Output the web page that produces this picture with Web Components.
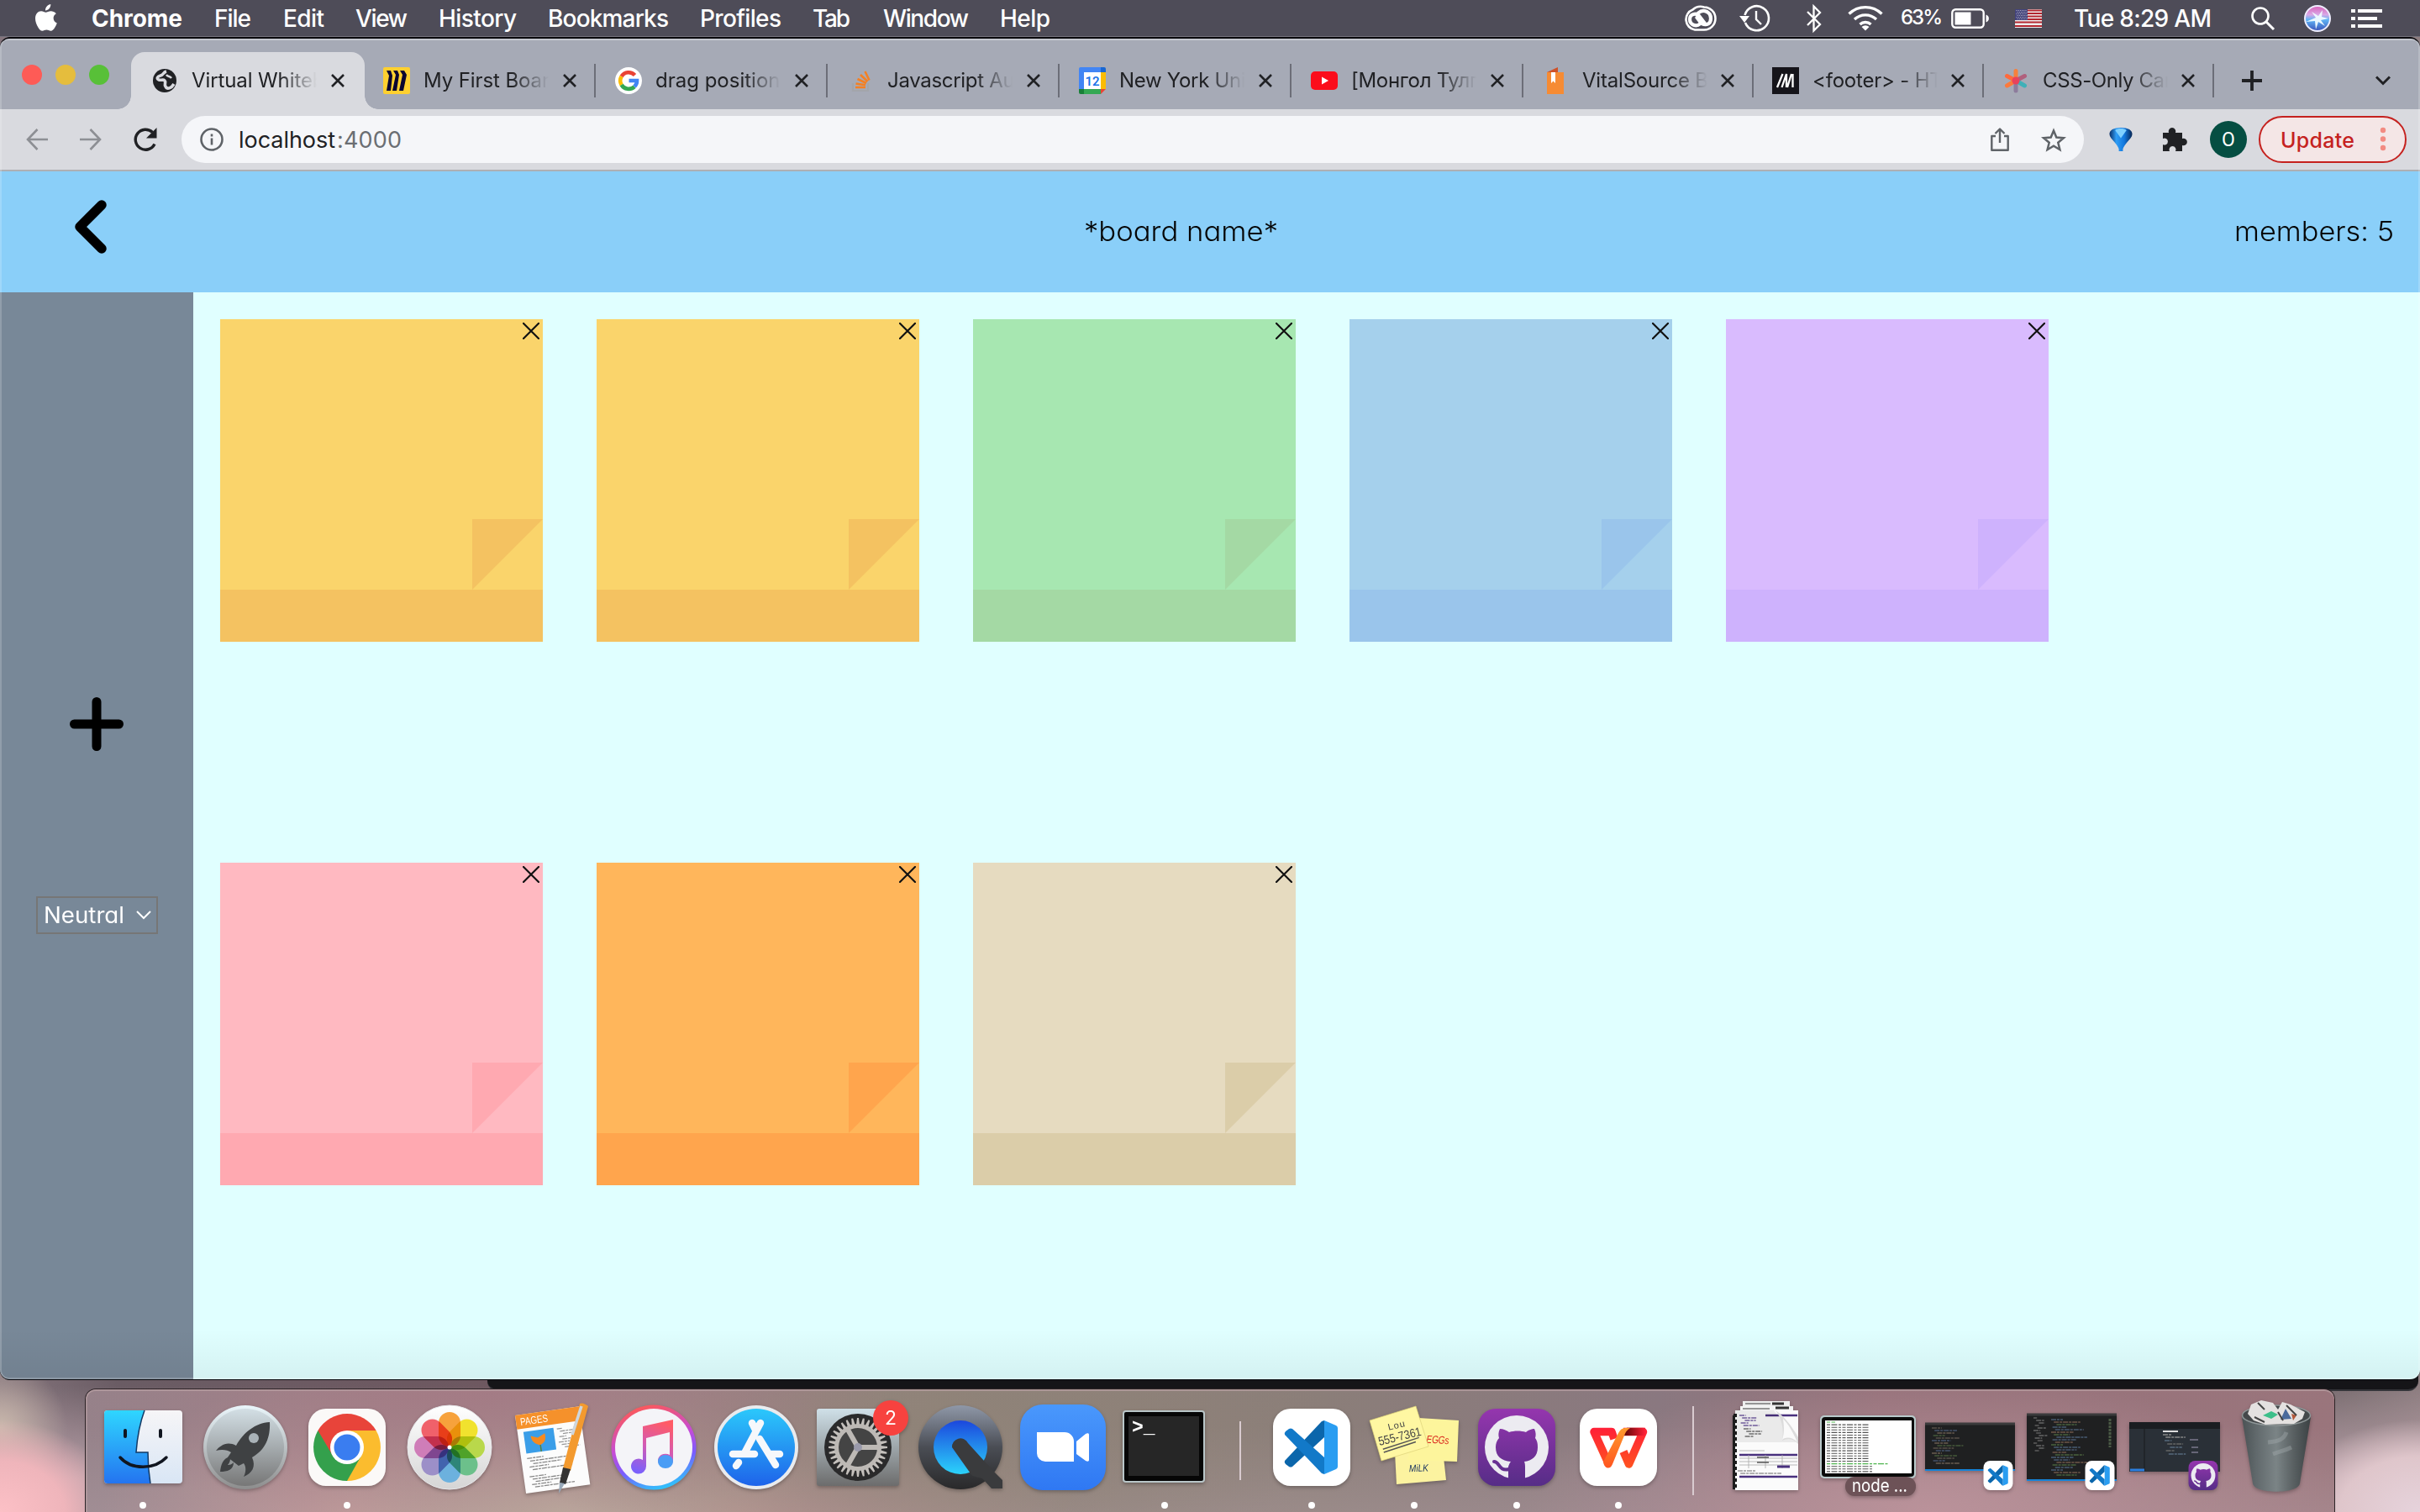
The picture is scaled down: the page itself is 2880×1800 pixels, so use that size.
<!DOCTYPE html>
<html lang="en">
<head>
<meta charset="utf-8">
<title>Virtual Whiteboard</title>
<style>
html,body{margin:0;height:100%}
body{width:2880px;height:1800px;overflow:hidden;font-family:Inter,"Liberation Sans",sans-serif;background:#6a6069}
</style>
</head>
<body>
<mac-desktop></mac-desktop>
<script>
const define = (name, render, after) => customElements.define(name, class extends HTMLElement {
  connectedCallback() {
    if (this.shadowRoot) return;
    this.attachShadow({ mode: 'open' }).innerHTML = render(this);
    if (after) after(this);
  }
});

/* Text run that takes exactly the width in "w": by letter spacing, or by wider letters with "stretch" */
define('fit-text', () => `<style>
:host{display:block;flex:none;white-space:pre;line-height:1.2}
span{display:inline-block;white-space:pre;transform-origin:0 50%}</style><span></span>`, el => {
  const span = el.shadowRoot.querySelector('span');
  span.textContent = el.getAttribute('t');
  const w = +el.getAttribute('w');
  const n = span.textContent.length;
  const nat = span.getBoundingClientRect().width;
  if (el.hasAttribute('stretch')) span.style.transform = `scaleX(${(w / nat).toFixed(4)})`;
  else span.style.letterSpacing = ((w - nat) / Math.max(1, n - 1)).toFixed(3) + 'px';
  el.style.width = w + 'px';
});

/* ---------- menu bar ---------- */
const menus = [['Chrome',109,108],['File',255,44],['Edit',337,49],['View',423,62],['History',522,93],['Bookmarks',652,144],['Profiles',833,97],['Tab',967,45],['Window',1051,102],['Help',1190,60]];
define('menu-bar', () => {
  let x = 68, out = '';
  for (const [t, l, w] of menus) { out += `<fit-text t="${t}" w="${w}" style="margin-left:${l - x}px${t === 'Chrome' ? ';font-weight:700' : ''}"></fit-text>`; x = l + w; }
  let stars = '';
  for (let r = 0; r < 6; r++) for (let c = 0; c < 6; c++) stars += `<circle cx="${2 + c * 2.2 + (r % 2)}" cy="${1.5 + r * 2}" r=".5" fill="#ddd"/>`;
  return `<style>
:host{display:flex;height:44px;align-items:center;background:#4e4c58;border-bottom:1px solid #74727c;box-sizing:border-box;color:#fff;font-size:28px;font-weight:500}
svg{display:block;flex:none;overflow:visible}
fit-text{padding-top:2px}
.r{margin-left:auto;display:flex;align-items:center;height:44px}
</style>
<svg width="26" height="32" viewBox="0 0 26 32" style="margin-left:42px;margin-top:-2px"><path fill="#fff" d="M18.300 0c.2 2-.6 3.900-1.800 5.300-1.200 1.400-2.900 2.300-4.500 2.200-.2-1.900.7-3.900 1.800-5.100C15 1 16.900.1 18.300 0zM24.800 11.200c-2 1.200-3.200 3-3.200 5.400 0 2.800 1.700 5 4.200 6-.6 1.900-1.500 3.700-2.700 5.400-1.300 1.900-2.600 3.800-4.700 3.800s-2.600-1.200-5-1.200-3 1.200-5 1.200-3.400-1.800-4.800-3.900C1.400 24.700 0 20.600 0 17 0 11.500 3.500 8.300 7 8.300c2.200 0 4.100 1.400 5.500 1.400 1.300 0 3.500-1.500 6.200-1.500 1.900 0 4.400.7 6.100 3z"/></svg>
${out}
<div class="r">
<svg width="40" height="30" viewBox="0 0 40 30"><path d="M25 1.500A13.500 13.500 0 0 1 25 28.500H14A12.500 12.500 0 0 1 11.500 4.500 14 14 0 0 1 25 1.500z" fill="none" stroke="#fff" stroke-width="2.600"/><path d="M20 21.500c-4 3.500-12 1.500-12-5.500S16 8 19.500 12.500l6.500 8.500" fill="none" stroke="#fff" stroke-width="4.200" stroke-linecap="round"/><path d="M18 8.500c6-5 15-2 15 6.500s-9 9-13 3.500l-3.500-4.500" fill="none" stroke="#fff" stroke-width="4.200" stroke-linecap="round"/></svg>
<svg width="37" height="32" viewBox="0 0 37 32" style="margin-left:27px"><path d="M6.500 12A14.500 14.500 0 1 1 7 21" fill="none" stroke="#fff" stroke-width="2.600"/><path d="M0 13h12l-6 8z" fill="#fff"/><path d="M20 7v10l6 6" fill="none" stroke="#fff" stroke-width="2.400"/></svg>
<svg width="20" height="32" viewBox="0 0 20 32" style="margin-left:42px"><path d="M2 8l15 15-7.500 7.500v-29L17 9 2 24" fill="none" stroke="#fff" stroke-width="2.300"/></svg>
<svg width="42" height="30" viewBox="0 0 42 30" style="margin-left:30px"><g fill="none" stroke="#fff" stroke-width="3.400"><path d="M1.500 9.500a28 28 0 0 1 39 0M8 16a19 19 0 0 1 26 0M14.500 22a9.500 9.500 0 0 1 13 0"/></g><path d="M16.500 25a6.500 6.500 0 0 1 9 0L21 29.500z" fill="#fff"/></svg>
<fit-text t="63%" w="50" style="font-size:24px;margin-left:21px;padding-top:0"></fit-text>
<svg width="46" height="24" viewBox="0 0 46 24" style="margin-left:10px"><rect x="1.300" y="1.300" width="37.400" height="21.400" rx="4" fill="none" stroke="#fff" stroke-width="2.400"/><rect x="4.500" y="4.500" width="19" height="15" fill="#fff"/><path d="M41.500 7.500c4.500 1 4.500 8 0 9z" fill="#fff"/></svg>
<svg width="32" height="22" viewBox="0 0 32 22" style="margin-left:30px"><rect width="32" height="22" fill="#eee"/><path d="M0 1.500h32M0 5h32M0 8.500h32M0 12h32M0 15.500h32M0 20h32" stroke="#b3262f" stroke-width="2"/><rect width="15" height="13" fill="#43437c"/>${stars}</svg>
<fit-text t="Tue 8:29 AM" w="164" style="margin-left:38px"></fit-text>
<svg width="28" height="28" viewBox="0 0 28 28" style="margin-left:47px"><circle cx="11" cy="11" r="9.500" fill="none" stroke="#fff" stroke-width="2.600"/><path d="M18 18l9 9" stroke="#fff" stroke-width="3"/></svg>
<svg width="32" height="32" viewBox="0 0 32 32" style="margin-left:35px"><defs><linearGradient id="s" x1="0" y1="0" x2="0" y2="1"><stop offset="0" stop-color="#d85fb8"/><stop offset=".35" stop-color="#d9a8e6"/><stop offset=".55" stop-color="#5fb4f5"/><stop offset="1" stop-color="#3a52b8"/></linearGradient></defs><circle cx="16" cy="16" r="15" fill="url(#s)" stroke="#eef" stroke-width="2"/><path d="M2 20l12-5-5-7 8 5 5-7-1 8 8 2-9 2 5 7-8-5-3 9-1-10z" fill="#effcff" opacity=".95"/></svg>
<svg width="37" height="22" viewBox="0 0 37 22" style="margin:0 45px 0 24px"><path d="M0 2h5M8 2h29M0 11h5M8 11h23M0 20h5M8 20h29" stroke="#fff" stroke-width="4"/></svg>
</div>`;
});

/* ---------- tabs ---------- */
const favs = {
globe:`<circle cx="16" cy="16" r="14" fill="#202124"/><path d="M18 5c-4 1-3 4-7 5s-5 4-2 5 5-1 7 1-1 4 1 7c2 4 7 2 10-3" fill="none" stroke="#d9dadf" stroke-width="3.600"/><path d="M18 9c2 3 4 1 6 4" fill="none" stroke="#d9dadf" stroke-width="2.500"/>`,
miro:`<rect width="32" height="32" rx="2" fill="#ffd02f"/><path d="M4 4h5l2 6-2 18H4l3-18zM12 4h5l2 5-3 19h-5l4-19zM20 4h5l3 5-4 19h-5l4-19z" fill="#0a0530"/>`,
google:`<circle cx="16" cy="16" r="16" fill="#fff"/><g fill="none" stroke-width="4.600"><path d="M23.500 9.500A10 10 0 0 0 7.600 11" stroke="#ea4335"/><path d="M7.600 11a10 10 0 0 0 0 10" stroke="#fbbc05"/><path d="M7.600 21A10 10 0 0 0 23 23.200" stroke="#34a853"/><path d="M23 23.200A10 10 0 0 0 26 16H16.500" stroke="#4285f4"/></g>`,
so:`<path d="M7 19v9h18v-9" fill="none" stroke="#a3a5ab" stroke-width="2.200"/><path d="M10 24h12M10.500 19.500l11.500 1.800M12.500 14l10.500 5M16 9l8.500 8M21.500 5l5 10.500" stroke="#f48024" stroke-width="2.600" fill="none"/>`,
cal:`<path d="M2 0h24v6H6v20H0V2a2 2 0 0 1 2-2z" fill="#4285f4"/><path d="M26 0h4a2 2 0 0 1 2 2v4h-6z" fill="#1967d2"/><path d="M26 6h6v20h-6z" fill="#fbbc04"/><path d="M6 26h20v6H6z" fill="#34a853"/><path d="M0 26h6v6H2a2 2 0 0 1-2-2z" fill="#188038"/><path d="M26 26h6l-6 6z" fill="#ea4335"/><rect x="6" y="6" width="20" height="20" fill="#fff"/><text x="16" y="21.500" font-size="15" font-weight="600" text-anchor="middle" fill="#1a73e8" font-family="Roboto,sans-serif">12</text>`,
yt:`<rect x="0" y="5" width="32" height="22" rx="5" fill="#fb0d1b"/><path d="M13 11.500l8 4.500-8 4.500z" fill="#fff"/>`,
vital:`<path d="M6 6L19 0v6z" fill="#cf5228"/><path d="M6 6h20v26H6z" fill="#f68b33"/><path d="M11 6h5v13l-2.500-2.500L11 19z" fill="#fff"/>`,
mdn:`<rect width="32" height="32" fill="#15141a"/><path d="M6 24L12.500 8M11.500 24L17 8v16M18 24l5-16M24.500 8v16" stroke="#fff" stroke-width="2.300" fill="none"/>`,
css:`<g stroke-width="5" stroke-linecap="round" fill="none"><path d="M16 16V4.500" stroke="#f6803c"/><path d="M16 16L5.500 10.500" stroke="#ff6a3c"/><path d="M16 16L5.500 22" stroke="#fb7a3c"/><path d="M16 16l10.500-5.500" stroke="#b0607c"/><path d="M16 16l10.500 6" stroke="#3fb0b8"/><path d="M16 16v12" stroke="#8d7c9c"/></g><circle cx="16" cy="16" r="4.500" fill="#e8425c"/>`
};
define('browser-tab', el => `<style>
:host{display:flex;align-items:center;box-sizing:border-box;height:68px;flex:none;width:276px;position:relative;color:#202124;font-size:24px}
:host([active]){background:#d9dadf;border-radius:16px 16px 0 0;width:278px;padding-left:24px}
:host([active])::before,:host([active])::after{content:"";position:absolute;bottom:0;width:16px;height:16px}
:host([active])::before{left:-16px;background:radial-gradient(circle at 0 0,transparent 15.500px,#d9dadf 16px)}
:host([active])::after{right:-16px;background:radial-gradient(circle at 100% 0,transparent 15.500px,#d9dadf 16px)}
:host([sep]){border-right:2px solid #6c6e78;height:40px;padding-left:23px}
:host([narrow]){width:274px;padding-left:22px}
svg{display:block;flex:none}
.t{width:149px;margin-left:16px;flex:none;overflow:hidden;white-space:nowrap;line-height:32px;-webkit-mask-image:linear-gradient(90deg,#000 105px,transparent 149px)}
.x{margin-left:17px}
:host([narrow]) .x{margin-left:16px}
</style><svg width="32" height="32" viewBox="0 0 32 32">${favs[el.getAttribute('icon')]}</svg><div class="t" style="letter-spacing:${el.getAttribute('ls') || '-.2'}px"><slot></slot></div>
<svg class="x" width="16" height="16" viewBox="0 0 16 16"><path d="M1 1l14 14M15 1L1 15" stroke="#202124" stroke-width="2.600"/></svg>`);

define('tab-strip', () => `<style>
:host{display:flex;height:84px;box-sizing:border-box;background:#a6aab6;border-top:2px solid #c4c7cf;align-items:flex-end}
.l{display:flex;gap:16px;padding:0 26px 29px 26px}
.l i{width:24px;height:24px;border-radius:50%}
browser-tab[sep]{margin-bottom:14px}
browser-tab:nth-of-type(2){margin-left:-1px}
svg{display:block}
</style><div class="l"><i style="background:#fe5b56"></i><i style="background:#e5bd3d"></i><i style="background:#58c038"></i></div>
<browser-tab active icon="globe" ls="-.1">Virtual Whiteboard</browser-tab>
<browser-tab sep icon="miro" ls="-.1">My First Board, O</browser-tab>
<browser-tab sep icon="google" ls="0">drag position ja</browser-tab>
<browser-tab sep icon="so" ls="-.3">Javascript Auto</browser-tab>
<browser-tab sep icon="cal" ls="-.3">New York Univer</browser-tab>
<browser-tab sep icon="yt" ls="-.3">[Монгол Тулга</browser-tab>
<browser-tab sep narrow icon="vital">VitalSource Book</browser-tab>
<browser-tab sep narrow icon="mdn">&lt;footer&gt; - HTML</browser-tab>
<browser-tab sep narrow icon="css" ls="-.4">CSS-Only Carou</browser-tab>
<svg width="24" height="24" viewBox="0 0 24 24" style="margin:0 0 22px 33px"><path d="M12 0v24M0 12h24" stroke="#202124" stroke-width="3.800"/></svg>
<svg width="18" height="12" viewBox="0 0 18 12" style="margin:0 35px 28px auto"><path d="M1 1.500l8 8 8-8" fill="none" stroke="#202124" stroke-width="3"/></svg>`);

define('tool-bar', () => `<style>
:host{display:flex;height:74px;box-sizing:border-box;background:#d9dadf;border-bottom:2px solid #adafb4;align-items:center;color:#202124}
svg{display:block;flex:none;overflow:visible}
.o{display:flex;align-items:center;width:2264px;height:56px;border-radius:28px;background:#f5f6f9;margin-left:28px;box-sizing:border-box;padding:0 22px;font-size:27px}
.o fit-text{padding-top:2px}
.a{width:44px;height:44px;border-radius:50%;background:#054e42;color:#fff;display:flex;align-items:center;justify-content:center;font:400 23px Roboto,sans-serif;margin-left:28px}
.u{display:flex;box-sizing:border-box;width:176px;height:56px;border:2.500px solid #c5221f;border-radius:28px;background:#f4e6e6;color:#c5221f;align-items:center;margin-left:14px;padding-left:24px;font-size:25px;font-weight:500}
.u fit-text{padding-top:1px}
</style>
<svg width="26" height="26" viewBox="0 0 26 26" style="margin-left:31px"><path d="M26 13H2M13.500 1L2 13l11.500 12" fill="none" stroke="#8d8f94" stroke-width="2.600"/></svg>
<svg width="26" height="26" viewBox="0 0 26 26" style="margin-left:38px"><path d="M0 13h24M12.500 1L24 13 12.500 25" fill="none" stroke="#8d8f94" stroke-width="2.600"/></svg>
<svg width="29" height="28" viewBox="0 0 29 28" style="margin-left:38px"><path d="M25 19.500A12 12 0 1 1 22.500 5.500" fill="none" stroke="#202124" stroke-width="3.400"/><path d="M27.500 0v12.500H15z" fill="#202124"/></svg>
<div class="o">
<svg width="28" height="28" viewBox="0 0 28 28"><circle cx="14" cy="14" r="12.500" fill="none" stroke="#5f6368" stroke-width="2.600"/><path d="M14 12.500v8M14 7.500v3" stroke="#5f6368" stroke-width="2.600"/></svg>
<fit-text t="localhost" w="115" style="margin-left:18px"></fit-text><fit-text t=":4000" w="77" style="margin-left:2px;color:#6b6e73"></fit-text>
<svg width="22" height="28" viewBox="0 0 22 28" style="margin-left:auto"><path d="M6 10H1.300v16.700h19.400V10H16M11 18V2M5.500 7L11 1.500 16.500 7" fill="none" stroke="#5f6368" stroke-width="2.400" stroke-linejoin="round"/></svg>
<svg width="28" height="27" viewBox="0 0 28 27" style="margin-left:39px"><path d="M14 2.500l3.300 8 8.600.7-6.600 5.600 2.100 8.400L14 20.700l-7.400 4.500 2.100-8.400-6.600-5.600 8.600-.7z" fill="none" stroke="#5f6368" stroke-width="2.500"/></svg>
</div>
<svg width="28" height="29" viewBox="0 0 28 30" style="margin-left:30px"><defs><linearGradient id="v" x1="0" x2="1"><stop offset="0" stop-color="#0b2e66"/><stop offset=".3" stop-color="#2f9df5"/><stop offset=".65" stop-color="#1277dd"/><stop offset="1" stop-color="#082653"/></linearGradient></defs><path d="M0 8C0 3 5 0 14 0s14 3 14 8c0 3-3 6-6 9.500-3 3.500-5 6.500-5.500 9V29h-5v-2.500C11 24 9 21 6 17.500 3 14 0 11 0 8z" fill="url(#v)"/><path d="M7 3c4-2.500 10-2.500 14 0l-7 10z" fill="#7fd0ff"/></svg>
<svg width="30" height="30" viewBox="0 0 30 30" style="margin-left:34px"><path d="M2 7h7a4.300 4.300 0 1 1 8 0h8v7a4.300 4.300 0 1 1 0 8v7h-8a4 4 0 1 0-7 0H2v-8a4 4 0 1 0 0-7z" fill="#202124"/></svg>
<div class="a">O</div>
<div class="u"><fit-text t="Update" w="88"></fit-text><svg width="6" height="28" viewBox="0 0 6 28" style="margin-left:31px"><g fill="#f28b82"><circle cx="3" cy="3" r="3.200"/><circle cx="3" cy="13.500" r="3.200"/><circle cx="3" cy="24" r="3.200"/></g></svg></div>`);

/* ---------- whiteboard app ---------- */
define('sticky-note', el => `<style>
:host{display:grid;width:384px;height:384px;margin:32px;grid-template-rows:28px 210px 84px 62px;background:var(--c)}
.x{justify-self:end;margin:4px 4px 0 0;display:block}
.f{grid-row:3;justify-self:end;width:84px;background:var(--d);clip-path:polygon(0 0,100% 0,0 100%)}
.b{grid-row:4;background:var(--d)}
</style><svg class="x" width="20" height="20" viewBox="0 0 20 20"><path d="M1 1l18 18M19 1L1 19" stroke="#111" stroke-width="2.200" stroke-linecap="round"/></svg><div class="f"></div><div class="b"></div>`,
el => { el.style.setProperty('--c', el.getAttribute('color')); el.style.setProperty('--d', el.getAttribute('shade')); });

define('board-header', () => `<style>
:host{display:flex;height:144px;background:#8acff9;align-items:center;color:#050505;font-size:33px;font-weight:350;font-feature-settings:"cv11","ss03"}
svg{display:block;margin:-12px 0 0 88px;flex:none}
</style><svg width="39" height="66" viewBox="0 0 39 66"><path d="M33 7L7 33l26 26" fill="none" stroke="#000" stroke-width="11.500" stroke-linecap="round" stroke-linejoin="round"/></svg>
<fit-text stretch t="*board name*" w="231" style="margin-left:1163px"></fit-text>
<fit-text stretch t="members: 5" w="190" style="margin:0 31px 0 auto"></fit-text>`);

define('board-tools', () => `<style>
:host{display:flex;flex-direction:column;align-items:center;width:230px;background:#788898;flex:none;box-sizing:border-box;padding-top:482px}
svg{display:block}
.s{margin-top:173px;display:flex;align-items:center;box-sizing:border-box;width:145px;height:45px;border:2px solid #767676;color:#fff;padding-left:7px;font-size:26.500px;font-weight:400;font-feature-settings:"cv11"}
</style><svg width="64" height="64" viewBox="0 0 64 64"><path d="M32 5.500v53M5.500 32h53" stroke="#000" stroke-width="11" stroke-linecap="round"/></svg>
<div class="s"><fit-text stretch t="Neutral" w="96"></fit-text><svg width="18" height="11" viewBox="0 0 18 11" style="margin-left:14px"><path d="M1 1l8 8 8-8" fill="none" stroke="#fff" stroke-width="2"/></svg></div>`);

define('white-board', () => `<style>
:host{display:flex;flex:1;flex-direction:column;min-height:0}
.m{display:flex;flex:1;min-height:0}
.g{flex:1;display:grid;grid-template-columns:repeat(5,448px);grid-template-rows:1fr 1fr;background:#e0ffff}
</style><board-header></board-header><div class="m"><board-tools></board-tools><div class="g">
<sticky-note color="#fad46b" shade="#f4c261"></sticky-note>
<sticky-note color="#fad46b" shade="#f4c261"></sticky-note>
<sticky-note color="#a7e7b1" shade="#a4d9a4"></sticky-note>
<sticky-note color="#a5d0ec" shade="#9ac5eb"></sticky-note>
<sticky-note color="#d9bbfe" shade="#ceb2fd"></sticky-note>
<sticky-note color="#ffb9c1" shade="#ffa9b1"></sticky-note>
<sticky-note color="#ffb65b" shade="#ffa54d"></sticky-note>
<sticky-note color="#e6dbc0" shade="#dbcda9"></sticky-note>
</div></div>`);

define('browser-window', () => `<style>
:host{display:flex;flex-direction:column;height:1599px;box-sizing:border-box;border-top:2px solid #09090d;border-bottom:1px solid #09090d;border-radius:12px;overflow:hidden;position:relative;background:#09090d}
:host::after{content:"";position:absolute;inset:0;border-radius:11px;box-shadow:inset 2px 0 #ffffff30,inset -2px 0 #ffffff30,inset 0 -2px #ffffff30;background:linear-gradient(#0000,#0000000e) bottom/100% 60px no-repeat}
</style><tab-strip></tab-strip><tool-bar></tool-bar><white-board></white-board>`);

/* ---------- dock ---------- */
const vscode = `<rect x="-46" y="-46" width="92" height="92" rx="21" fill="#fff"/><path d="M-32 16q-1 2 1 4l4 3q2 1 4 0L15-12V-32L12-31z" fill="#0b66ab"/><path d="M-32-15q-1-2 1-4l4-3q2-1 4 0L15 12V32L12 31z" fill="#1279c8"/><path d="M15-32L29-26q2 1 2 3V23q0 2-2 3L15 32z" fill="#2a9df1"/>`;
const github = `<defs><linearGradient id="gh" gradientUnits="userSpaceOnUse" x1="0" y1="-46" x2="0" y2="46"><stop offset="0" stop-color="#9536ae"/><stop offset="1" stop-color="#562d87"/></linearGradient></defs><rect x="-46" y="-46" width="92" height="92" rx="21" fill="url(#gh)"/><circle r="38" fill="#ecebf1"/><path d="M-20-22C-16-22-12-20-9-18-3-20 5-20 11-18 13-20 18-22 21-22 23-18 23-14 22-11 25-7 25-3 25 0 25 11 18 16 9 17 10 19 10 22 10 25V40H-10V29V23C-9 20-8 18-7 17-18 16-25 11-25 0-25-4-24-8-21-11-22-14-22-18-20-22z" fill="url(#gh)"/><path d="M-27 17C-20 17-22 29-9 26" fill="none" stroke="url(#gh)" stroke-width="4" stroke-linecap="round"/>`;
const codeLines = (x, y, w, n, cols, step = 3) => { let s = ''; for (let i = 0; i < n; i++) s += `<path d="M${x + (i * 7) % 5 * 1.6} ${y + i * step}h${w * (.35 + ((i * 37) % 10) / 16)}" stroke="${cols[i % cols.length]}" stroke-width="1.300" stroke-dasharray="6 1 3 1"/>`; return s; };
const gear = () => { let s = ''; for (let i = 0; i < 32; i++) s += `<path d="M-2-27l1-8h2l1 8z" transform="rotate(${i * 11.25})" fill="#c4c0bc"/>`; return s; };
const petals = ['#f7a23c','#f1e22e','#b9d84b','#6cc08b','#6cb1de','#9c8fc8','#cf7db8','#f0616a'].map((c, i) => `<rect x="-13" y="-42" width="26" height="41" rx="13" fill="${c}" transform="rotate(${i * 45})" style="mix-blend-mode:multiply"/>`).join('');
const icons = {
finder:`<defs><linearGradient id="a" x1="0" y1="0" x2="0" y2="1"><stop offset="0" stop-color="#2fd6ff"/><stop offset="1" stop-color="#2474f0"/></linearGradient><linearGradient id="b" x1="0" y1="0" x2="0" y2="1"><stop offset="0" stop-color="#f6f5f7"/><stop offset="1" stop-color="#d9e6f5"/></linearGradient></defs><rect x="-46" y="-44" width="93" height="87" rx="4" fill="url(#b)"/><path d="M-42-44H2C-5-25-7-8-8 6H6c0 13 1 25 3 37h-51a4 4 0 0 1-4-4v-79a4 4 0 0 1 4-4z" fill="url(#a)"/><path d="M2-44C-5-25-7-8-8 6H6c0 13 1 25 3 37" fill="none" stroke="#123a66" stroke-width="1.500"/><path d="M-21-20v7M21-20v7" stroke="#10151f" stroke-width="4" stroke-linecap="round"/><path d="M-27 12C-14 27 14 27 28 12" fill="none" stroke="#10151f" stroke-width="3.500" stroke-linecap="round"/>`,
launch:`<defs><linearGradient id="a" x1="0" y1="0" x2="0" y2="1"><stop offset="0" stop-color="#d3dfe5"/><stop offset="1" stop-color="#777"/></linearGradient><linearGradient id="b" x1="0" y1="0" x2="0" y2="1"><stop offset="0" stop-color="#eaf6fb"/><stop offset="1" stop-color="#8d8d8d"/></linearGradient></defs><circle r="50" fill="url(#b)"/><circle r="46" fill="url(#a)"/><path d="M29-30C12-29-2-18-11-2-22-8-30-2-35 4c7-2 14-1 18 2l-4 6 13 10 6-3c3 4 3 10 0 16C8 31 13 23 8 12 24 3 30-12 29-30z" fill="#3f4143"/><circle cx="10" cy="-11" r="6" fill="#a9b2b7"/><path d="M-18 11c-9 2-11 10-12 18 8 0 16-2 16-11-3 3-5 3-7 3 3-3 3-6 3-10z" fill="#3f4143"/>`,
chrome:`<rect x="-46" y="-46" width="92" height="92" rx="21" fill="#fbf9f8"/><path d="M0 0L-34.600-20A40 40 0 0 1 34.600-20z" fill="#e8443a"/><path d="M0 0V-20H34.600A40 40 0 0 1 0 40z" fill="#fbbc2e"/><path d="M-34.600-20A40 40 0 0 0 0 40L17 10 0 0z" fill="#34a04c"/><path d="M-34.600-20L-17 10 0-20z" fill="#e8443a"/><circle r="20" fill="#fff"/><circle r="15.500" fill="#3a7df0"/>`,
photos:`<defs><linearGradient id="a" x1="0" y1="0" x2="0" y2="1"><stop offset="0" stop-color="#fff"/><stop offset="1" stop-color="#d5d5d5"/></linearGradient></defs><circle r="50" fill="url(#a)" stroke="#e7e7ea"/><g style="isolation:isolate">${petals}</g><circle r="2.500" fill="#fff"/>`,
pages:`<g transform="translate(1,2) rotate(-8)"><rect x="-39" y="-46" width="77" height="94" fill="#fcfcfc"/><rect x="-39" y="-46" width="77" height="17" fill="#f5912b"/><text x="-34" y="-33" font-size="12.500" fill="#fff" font-family="Liberation Sans,sans-serif" textLength="33" lengthAdjust="spacingAndGlyphs">PAGES</text><rect x="-32" y="-25" width="36" height="26" fill="#3b9ee8"/><path d="M-24-19l8 3 9-4c1 8-2 12-8 13-6-2-9-6-9-12z" fill="#f68a1f"/><path d="M-14-7v8" stroke="#57803d" stroke-width="1.500"/>${codeLines(8,-23,20,8,['#999'],3.2)}${codeLines(-32,7,56,5,['#888'],3.5)}${codeLines(-32,29,56,5,['#888'],3.2)}</g><path d="M33-52q4-2 10 3L22 28l-9-3z" fill="#f39a2f"/><path d="M35-49L24-15" stroke="#cfd6dc" stroke-width="3.500"/><path d="M13 24l9 2-6 18-7-2z" fill="#333"/><path d="M9 42l6 1-7 12z" fill="#9ab"/>`,
music:`<defs><linearGradient id="a" x1=".3" y1="0" x2=".6" y2="1"><stop offset="0" stop-color="#ff5a52"/><stop offset=".45" stop-color="#c54bd8"/><stop offset=".7" stop-color="#7a5cff"/><stop offset="1" stop-color="#2cc6fb"/></linearGradient><linearGradient id="b" x1=".6" y1="0" x2=".3" y2="1"><stop offset="0" stop-color="#ff5b66"/><stop offset=".5" stop-color="#d35bb4"/><stop offset="1" stop-color="#7b60fb"/></linearGradient></defs><circle r="50.500" fill="url(#a)"/><circle r="46" fill="#f4f4f8"/><path d="M-13-25L23-33V15a9 8 0 1 1-4-6V-18L-9-11V22a9 9 0 1 1-4-7z" fill="url(#b)"/><ellipse cx="14" cy="17" rx="9" ry="8" fill="#4a9df5"/>`,
store:`<defs><linearGradient id="a" x1="0" y1="0" x2="0" y2="1"><stop offset="0" stop-color="#2bc8fb"/><stop offset="1" stop-color="#1e63ea"/></linearGradient></defs><circle r="50" fill="#e9ebee"/><circle r="46" fill="url(#a)"/><g stroke="#f6f8fb" stroke-width="8.500" stroke-linecap="round" fill="none"><path d="M5-29L-14 7M-5-29l4 8M4-10L23 21M-28 8H-2M15 8h13M-21 18l-3 4"/></g>`,
settings:`<defs><linearGradient id="a" x1="0" y1="0" x2="0" y2="1"><stop offset="0" stop-color="#cfe0e8"/><stop offset="1" stop-color="#6c6c6c"/></linearGradient></defs><rect x="-49" y="-46" width="98" height="92" rx="3" fill="url(#a)"/><circle r="40" fill="#2a2a2b"/>${gear()}<circle r="25.500" fill="#444" stroke="#bdb9b5" stroke-width="5"/><path d="M0 0h24M0 0L-12-21M0 0l-12 21" stroke="#bdb9b5" stroke-width="6"/><circle r="5" fill="#99a"/><circle cx="39" cy="-35" r="21" fill="#f7423f"/><text x="39" y="-27" text-anchor="middle" font-size="23" fill="#fff">2</text>`,
quick:`<defs><linearGradient id="a" x1="0" y1="0" x2="0" y2="1"><stop offset="0" stop-color="#8f98a8"/><stop offset=".5" stop-color="#4a4d54"/><stop offset="1" stop-color="#29292a"/></linearGradient><linearGradient id="b" x1="0" y1="0" x2="0" y2="1"><stop offset="0" stop-color="#1c47dd"/><stop offset="1" stop-color="#2bd3fb"/></linearGradient></defs><circle r="50" fill="url(#a)"/><circle r="32" fill="url(#b)"/><path d="M-10 0a10 10 0 0 1 19-5l29 32 12 12v10H37L26 37 14 34z" fill="#3a3b3d"/>`,
zoom:`<defs><linearGradient id="a" x1="0" y1="0" x2="0" y2="1"><stop offset="0" stop-color="#4a98fc"/><stop offset="1" stop-color="#2f78f3"/></linearGradient></defs><rect x="-51" y="-51" width="102" height="102" rx="27" fill="url(#a)"/><path d="M-31-18H2a11 11 0 0 1 11 11V17h-34a10 10 0 0 1-10-10zM16-7L27-16c2-1 4-1 4 1V15c0 2-2 2-4 1L16 8z" fill="#fff"/>`,
term:`<g transform="translate(-1,0)"><rect x="-49" y="-44" width="98" height="86" rx="4" fill="#b9c6c8"/><rect x="-47" y="-42" width="94" height="82" rx="2" fill="#060606"/><rect x="-42" y="-37" width="84" height="71" fill="#262626"/><text x="-38" y="-17" font-size="23" font-weight="700" fill="#fff" font-family="Liberation Mono,monospace">&gt;_</text></g>`,
vscode,
notes:`<g font-family="Liberation Sans,sans-serif"><path d="M-23 6L34 3 38 39-21 44z" fill="#fcf3a0"/><text x="-7" y="29" font-size="12" fill="#1b3460" font-style="italic" textLength="23" lengthAdjust="spacingAndGlyphs" transform="rotate(-2)">MiLK</text><path d="M5-35L53-32 51 17-8 15z" fill="#fdf59c"/><text x="14" y="-6" font-size="13" fill="#d9201a" font-style="italic" textLength="27" lengthAdjust="spacingAndGlyphs" transform="rotate(3)">EGGs</text><path d="M-53-32L2-49 17-1-39 16z" fill="#fff7a2" stroke="#dcd178" stroke-width=".7"/><g transform="translate(-18,-16) rotate(-14)"><text x="-11" y="-7" font-size="11" fill="#444" letter-spacing="1">Lou</text><text x="-26" y="8" font-size="14.500" fill="#444" textLength="52" lengthAdjust="spacingAndGlyphs">555-7361</text><path d="M-23 13L22 10M-23 17L17 14" stroke="#555" stroke-width="1.500"/></g></g>`,
github,
wps:`<rect x="-46" y="-46" width="92" height="92" rx="21" fill="#fff"/><defs><linearGradient id="a" gradientUnits="userSpaceOnUse" x1="0" y1="-23" x2="0" y2="25"><stop offset="0" stop-color="#ff2038"/><stop offset="1" stop-color="#ff5420"/></linearGradient><linearGradient id="b" gradientUnits="userSpaceOnUse" x1="0" y1="-23" x2="0" y2="25"><stop offset="0" stop-color="#ff9a2c"/><stop offset="1" stop-color="#ff5420"/></linearGradient><linearGradient id="c" x1="0" x2="1"><stop offset="0" stop-color="#5d0505"/><stop offset="1" stop-color="#ff2038"/></linearGradient></defs><path d="M-5-10L-8-18.500H-29L-11.500 20M6-18.500H29.500L12.500 20 6 5" fill="none" stroke="url(#a)" stroke-width="9.500" stroke-linejoin="round"/><path d="M10-23.200H32V-14H7z" fill="url(#c)"/><path d="M-13 24.500q-4-1-5-7L0-17q3-6 8-6h6Q9-20 7-14L-7 20q-2 5-6 4.500z" fill="url(#b)"/>`,
papers:`<path d="M-27-55h56v12h-56z" fill="#eee"/><path d="M-30-49h63v12h-63z" fill="#f4f4f4"/><path d="M8-52h14M12-47h16" stroke="#333" stroke-width="3"/><path d="M-24-52h30M-27-46h32" stroke="#777" stroke-width="1.500"/><rect x="-39" y="-38" width="6" height="88" fill="#1c1c1c"/><rect x="-36" y="-44" width="75" height="95" fill="#fbfbfb"/><path d="M-36-40v88" stroke="#1c1c1c" stroke-width="4" stroke-dasharray="4 3"/>${codeLines(-31,-38,22,5,['#7a64a6'])}<path d="M0-38h38" stroke="#49317e" stroke-width="2.500"/>${codeLines(-26,-22,24,4,['#777'])}<path d="M-36-44H10L39-6H-36z" fill="#0001"/><path d="M12-44C20-34 22-20 20-8 27-12 34-10 39-4V-12C33-22 24-36 12-44z" fill="#dcdcdc"/><path d="M21-34C22-26 23-18 20-9 25-13 32-12 38-6 33-18 27-28 21-34z" fill="#fafafa"/><path d="M-31 9h69M-31 35h69" stroke="#49317e" stroke-width="2.500"/><path d="M-31 4h30M-31 13h69M-31 17h69M-31 21h69M-20 9v16M0 9v16M20 9v16" stroke="#aaa" stroke-width=".8"/><path d="M14 23h15" stroke="#49317e" stroke-width="3"/><path d="M-10 12h14M-10 18h14" stroke="#555" stroke-width="1.500"/>${codeLines(-33,28,62,2,['#999'])}`,
node:`<rect x="-56" y="-38" width="114" height="75" rx="5" fill="#b9cacb"/><rect x="-54" y="-36" width="110" height="71" rx="4" fill="#0b0b0b"/><rect x="-50" y="-32" width="103" height="63" fill="#fff"/>${Array.from({length:20},(_,i)=>`<path d="M-48 ${-30+i*3.1}h${i===0?10:i===16?74:i>16?54:50}" stroke="${i===0||i===16?'#4fb54f':'#555'}" stroke-width="1.100" stroke-dasharray="4 1.500 7 1.500 3 1.500"/>`).join('')}<rect x="-26" y="35" width="84" height="23" rx="11" fill="#6d5257"/><text x="-18" y="53" font-size="22" fill="#fff" textLength="66" lengthAdjust="spacingAndGlyphs">node ...</text>`,
code1:`<rect x="-53" y="-29" width="107" height="57" fill="#1f2021"/><path d="M-53-28h107" stroke="#3b3b3c" stroke-width="3"/><path d="M-53 27h107" stroke="#1583d8" stroke-width="2"/>${codeLines(-45,-23,34,15,['#574f48','#44526a','#6a5c50','#45583a'])}<g transform="translate(34,33.500) scale(.38)">${vscode}</g>`,
code2:`<rect x="-53" y="-40" width="107" height="80" fill="#1f2021"/><path d="M-53-39h107" stroke="#3b3b3c" stroke-width="3"/><path d="M-53 39h107" stroke="#1583d8" stroke-width="2"/>${codeLines(-45,-35,12,14,['#666'])}${codeLines(-24,-33,40,23,['#48586f','#6e5648','#4a613d','#485b72'])}<path d="M46-34v34" stroke="#4b5a45" stroke-width="3" stroke-dasharray="3 1"/><g transform="translate(34,33.500) scale(.38)">${vscode}</g>`,
desk:`<g transform="translate(1,0)"><rect x="-54" y="-30" width="108" height="59" fill="#2a3037"/><rect x="-54" y="-30" width="108" height="8" fill="#1a1d21"/><path d="M-36-22v50" stroke="#181b1e"/><path d="M-53 27h17" stroke="#2b7fe0" stroke-width="3"/><path d="M-14-19h18" stroke="#ddd" stroke-width="2"/>${codeLines(-14,-15,30,2,['#888'])}${codeLines(-12,-8,24,5,['#55687c','#666'],4)}<path d="M18-9h10M20 0h8M20 6h8" stroke="#667" stroke-width="2"/></g><g transform="translate(35,33.500) scale(.38)">${github}</g>`,
trash:`<defs><linearGradient id="a" x1="0" x2="1"><stop offset="0" stop-color="#4a5254"/><stop offset=".2" stop-color="#60686b"/><stop offset=".5" stop-color="#7b8486"/><stop offset=".75" stop-color="#596062"/><stop offset="1" stop-color="#3b4143"/></linearGradient></defs><path d="M-41-36h82L28 43c-2 13-54 13-56 0z" fill="url(#a)"/><ellipse cy="-38" rx="40.500" ry="12" fill="#45494b" stroke="#8e9697" stroke-width="1.500"/><path d="M-34-40l4-11 12-5 14 3 6 8 5-9 10 3 17 9-3 8-10 6-34 1-14-5z" fill="#e4e1e0"/><path d="M-16-38l10-5 8 4-8 5z" fill="#3dbf8a"/><path d="M5-33l6-13 7 12z" fill="#4a6a9c"/><path d="M18-40l6 2-4 6z" fill="#b4583a"/><path d="M-22-53l8 8M12-50l12 12M-26-36l12 6M2-42l6 10" stroke="#444" stroke-width="2"/><path d="M12-18c-3 9-10 11-22 12M-4 8c10-4 14-4 22-8" stroke="#a5adae" stroke-width="5" opacity=".4" fill="none"/>`
};
define('dock-icon', el => `<style>
:host{display:flex;flex-direction:column;align-items:center;width:121.600px;height:146px;flex:none;font-family:Inter,sans-serif}
svg{display:block;overflow:visible;margin-top:9px;filter:drop-shadow(0 2px 2px #0004)}
i{display:block;width:8px;height:8px;border-radius:50%;background:#fff;margin-top:5px}
</style><svg width="120" height="120" viewBox="-60 -60 120 120">${icons[el.getAttribute('icon')]}</svg>${el.hasAttribute('running') ? '<i></i>' : ''}`);

define('mac-dock', () => `<style>
:host{display:flex;box-sizing:border-box;width:2676px;height:146px;margin:0 0 0 102px;padding-left:7.500px;border-radius:12px 12px 0 0;position:relative;
background:radial-gradient(500px 160px at 17% 0,#a47b85 0,#a47b8500),radial-gradient(500px 170px at 37% 30%,#8f8378,#8f837800),radial-gradient(300px 160px at 21% 100%,#baa79c,#baa79c00),radial-gradient(400px 200px at 29% 100%,#bd9796,#bd979600),radial-gradient(300px 160px at 12% 100%,#be9799,#be979900),radial-gradient(500px 160px at 82% 100%,#ba929a,#ba929a00),linear-gradient(#0000 30%,#b8a4a855),linear-gradient(90deg,#95828a,#9c858a 22%,#907a84 30%,#8f827a 38%,#8b7e79 55%,#8a7880 70%,#96727b 80%,#9a757c);
box-shadow:inset 0 2px #b9a0a4aa,inset 2px 0 #b9a0a488,0 0 0 1px #2d2427}
hr{border:0;margin:0;width:2px;background:#d9cbd0;flex:none}
.s1{height:70px;margin:38px 24px 38px 27.500px}
.s2{height:106px;margin:20px 23.500px 20px 27.500px}
</style>
<dock-icon icon="finder" running></dock-icon><dock-icon icon="launch"></dock-icon><dock-icon icon="chrome" running></dock-icon><dock-icon icon="photos"></dock-icon><dock-icon icon="pages"></dock-icon><dock-icon icon="music"></dock-icon><dock-icon icon="store"></dock-icon><dock-icon icon="settings"></dock-icon><dock-icon icon="quick"></dock-icon><dock-icon icon="zoom"></dock-icon><dock-icon icon="term" running></dock-icon>
<hr class="s1">
<dock-icon icon="vscode" running></dock-icon><dock-icon icon="notes" running></dock-icon><dock-icon icon="github" running></dock-icon><dock-icon icon="wps" running></dock-icon>
<hr class="s2">
<dock-icon icon="papers"></dock-icon><dock-icon icon="node"></dock-icon><dock-icon icon="code1"></dock-icon><dock-icon icon="code2"></dock-icon><dock-icon icon="desk"></dock-icon><dock-icon icon="trash"></dock-icon>`);

define('mac-desktop', () => `<style>
:host{display:flex;flex-direction:column;width:2880px;height:1800px;position:relative;overflow:hidden;
background:radial-gradient(140px 110px at 0 1800px,#fcc0c6 0,#efb5bb 55%,#efb5bb00),radial-gradient(80px 80px at 0 1700px,#c9b8ac,#c9b8ac00),radial-gradient(160px 110px at 2880px 1800px,#e6d3dc 0,#dfc6cb 60%,#dfc6cb00),linear-gradient(#0000 1650px,#b8a0a8 1760px),linear-gradient(90deg,#85757d 0,#6a5c64 140px,#6e5860 600px,#6a6064 2700px,#8d7d80 2880px)}
.w{position:absolute;left:580px;right:2px;top:1600px;height:56px;background:#151518;border-radius:0 0 12px 12px;box-sizing:border-box;border-bottom:2px solid #35353a}
browser-window{margin-bottom:11px}
</style><div class="w"></div><menu-bar></menu-bar><browser-window></browser-window><mac-dock></mac-dock>`);
</script>
</body>
</html>
